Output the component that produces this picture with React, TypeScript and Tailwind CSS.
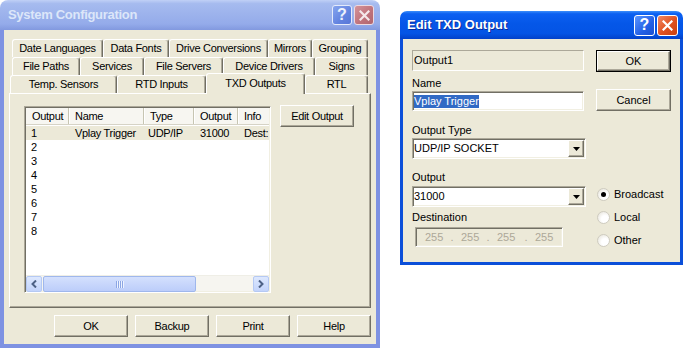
import React from "react";

// classic 3D edges used by buttons, fields and panels
const raised =
  "border border-t-white border-l-white border-r-[#716f64] border-b-[#716f64] shadow-[inset_-1px_-1px_0_#aca899]";
const sunken =
  "border border-t-[#aca899] border-l-[#aca899] border-r-white border-b-white shadow-[inset_1px_1px_0_#716f64,inset_-1px_-1px_0_#f1efe2]";

const tabRows = [
  {
    cls: "ml-[3px]",
    tabs: [
      { label: "Date Languages", w: "w-[91px]" },
      { label: "Data Fonts", w: "w-[66px]" },
      { label: "Drive Conversions", w: "w-[99px]" },
      { label: "Mirrors", w: "w-[44px]" },
      { label: "Grouping", w: "w-[56px]" },
    ],
  },
  {
    cls: "ml-[3px]",
    tabs: [
      { label: "File Paths", w: "w-[68px]" },
      { label: "Services", w: "w-[64px]" },
      { label: "File Servers", w: "w-[79px]" },
      { label: "Device Drivers", w: "w-[92px]" },
      { label: "Signs", w: "w-[53px]" },
    ],
  },
  {
    cls: "ml-[1px]",
    tabs: [
      { label: "Temp. Sensors", w: "w-[107px]" },
      { label: "RTD Inputs", w: "w-[89px]" },
      { label: "TXD Outputs", w: "w-[99px]", selected: true },
      { label: "RTL", w: "w-[63px]" },
    ],
  },
];

const columns = [
  { label: "Output", w: "w-[43px]" },
  { label: "Name", w: "w-[75px]" },
  { label: "Type", w: "w-[50px]" },
  { label: "Output", w: "w-[44px]" },
  { label: "Info", w: "w-[40px]" },
];

const rows = [
  ["1", "Vplay Trigger", "UDP/IP", "31000", "Dest:"],
  ["2"],
  ["3"],
  ["4"],
  ["5"],
  ["6"],
  ["7"],
  ["8"],
];

function Button({ label, className = "", isDefault = false }: { label: string; className?: string; isDefault?: boolean }) {
  if (isDefault) {
    return (
      <div className={`border border-black ${className}`}>
        <div className={`h-full bg-[#ece9d8] ${raised} flex items-center justify-center`}>{label}</div>
      </div>
    );
  }
  return <div className={`bg-[#ece9d8] ${raised} flex items-center justify-center ${className}`}>{label}</div>;
}

function CaptionButtons({ active }: { active: boolean }) {
  const size = active ? "w-[21px] h-[21px]" : "w-[20px] h-[20px]";
  return (
    <div className="flex gap-[2px]">
      <div
        className={`${size} rounded-[3px] border flex items-center justify-center font-bold text-[16px] leading-none ${
          active
            ? "border-white text-white bg-[linear-gradient(135deg,#5b95ff,#2260e6_60%,#1a4fd0)]"
            : "border-[#e4eafb] text-[#eef2fc] bg-[linear-gradient(135deg,#86a4ee,#6283e0_60%,#5877d8)]"
        }`}
      >
        ?
      </div>
      <div
        className={`${size} rounded-[3px] border flex items-center justify-center ${
          active
            ? "border-white bg-[linear-gradient(135deg,#f08a66,#e0511f_55%,#c9400f)]"
            : "border-[#ecd9e0] bg-[linear-gradient(135deg,#d4939a,#c0737c_55%,#b0666f)]"
        }`}
      >
        <svg width="11" height="11" viewBox="0 0 11 11">
          <path d="M1.5 1.5L9.5 9.5M9.5 1.5L1.5 9.5" stroke={active ? "#ffffff" : "#f4e8ea"} strokeWidth="2.2" strokeLinecap="square" />
        </svg>
      </div>
    </div>
  );
}

function ScrollArrow({ dir }: { dir: "left" | "right" }) {
  return (
    <div className="w-[16px] h-[16px] rounded-[2px] border border-[#b5c9f3] bg-[linear-gradient(to_bottom,#dde8fe,#c3d4fb)] flex items-center justify-center">
      <svg width="6" height="8" viewBox="0 0 6 8">
        <path
          d={dir === "left" ? "M5 0.5L1.5 4L5 7.5" : "M1 0.5L4.5 4L1 7.5"}
          stroke="#4d6185"
          strokeWidth="2"
          fill="none"
        />
      </svg>
    </div>
  );
}

function ListView() {
  return (
    <div className={`w-[247px] h-[187px] bg-white ${sunken} p-[1px] flex flex-col overflow-hidden`}>
      <div className="h-[17px] flex bg-[#f7f6f1] border-b border-b-[#d6d3c6] shrink-0">
        {columns.map((c, i) => (
          <div
            key={i}
            className={`${c.w} shrink-0 pl-[6px] flex items-center whitespace-nowrap ${
              i < columns.length - 1 ? "border-r border-r-[#c7c5b2] shadow-[1px_0_0_#ffffff]" : ""
            }`}
          >
            {c.label}
          </div>
        ))}
      </div>
      <div className="flex-1 pt-[1px]">
        {rows.map((r, i) => (
          <div key={i} className={`h-[14px] flex items-center whitespace-nowrap ${i === 0 ? "bg-[#ece9d8]" : ""}`}>
            <div className="w-[43px] pl-[5px] shrink-0">{r[0]}</div>
            <div className="w-[75px] pl-[6px] shrink-0">{r[1]}</div>
            <div className="w-[50px] pl-[4px] shrink-0">{r[2]}</div>
            <div className="w-[44px] pl-[6px] shrink-0">{r[3]}</div>
            <div className="w-[31px] pl-[6px] shrink-0 overflow-hidden">{r[4]}</div>
          </div>
        ))}
      </div>
      <div className="h-[16px] flex shrink-0 bg-[#f6f5f0] border-t border-t-[#efeee6]">
        <ScrollArrow dir="left" />
        <div className="w-[153px] ml-[1px] h-[16px] rounded-[2px] border border-[#9fb7ec] bg-[linear-gradient(to_bottom,#d4e0fd,#bccdfa)] flex items-center justify-center gap-[1px]">
          {[0, 1, 2, 3].map((k) => (
            <div key={k} className="w-[1px] h-[7px] bg-[#8ca6e4] shadow-[1px_0_0_#eef3ff]" />
          ))}
        </div>
        <div className="flex-1" />
        <ScrollArrow dir="right" />
      </div>
    </div>
  );
}

function SystemConfiguration() {
  return (
    <div className="w-[380px] h-[348px] flex flex-col shrink-0">
      <div className="h-[30px] rounded-t-[8px] bg-[linear-gradient(to_bottom,#c0d0f6_0%,#a6bbef_12%,#9cb2ec_50%,#94abea_80%,#8299df_100%)] flex items-center pl-[8px] pr-[6px]">
        <span className="flex-1 text-[13px] font-bold tracking-[-0.3px] text-[#dce6f9]">System Configuration</span>
        <CaptionButtons active={false} />
      </div>
      <div className="flex-1 bg-[#ece9d8] border-x-4 border-b-4 border-[#7e92e2] px-[5px] pt-[9px] pb-[7px] flex flex-col tracking-[-0.3px]">
        {tabRows.map((row, ri) => (
          <div key={ri} className={`h-[18px] flex ${row.cls}`}>
            {row.tabs.map((t: { label: string; w: string; selected?: boolean }) => (
              <div
                key={t.label}
                className={`${t.w} shrink-0 flex items-center justify-center whitespace-nowrap rounded-t-[3px] border-l border-t border-r border-l-white border-t-white border-r-[#716f64] shadow-[inset_-1px_0_0_#aca899] bg-[#ece9d8] ${
                  t.selected ? "h-[21px] -mt-[2px] relative z-10 pb-[2px]" : "h-[18px]"
                }`}
              >
                {t.label}
              </div>
            ))}
          </div>
        ))}
        <div className={`h-[215px] ${raised} pl-[14px] pt-[12px] flex items-start`}>
          <ListView />
          <Button label="Edit Output" className="w-[74px] h-[22px] ml-[9px] -mt-[1px]" />
        </div>
        <div className="mt-[7px] flex justify-end gap-[7px]">
          {["OK", "Backup", "Print", "Help"].map((b) => (
            <Button key={b} label={b} className="w-[74px] h-[22px]" />
          ))}
        </div>
      </div>
    </div>
  );
}

function Radio({ label, checked = false }: { label: string; checked?: boolean }) {
  return (
    <div className="flex items-center h-[13px]">
      <div className="w-[13px] h-[13px] rounded-full border border-[#cfccc0] bg-[radial-gradient(circle_at_65%_65%,#ffffff_35%,#e2dfd4)] flex items-center justify-center">
        {checked && <div className="w-[5px] h-[5px] rounded-full bg-black" />}
      </div>
      <span className="ml-[4px]">{label}</span>
    </div>
  );
}

function Combo({ value }: { value: string }) {
  return (
    <div className={`w-[174px] h-[21px] bg-white ${sunken} flex items-center`}>
      <span className="flex-1 pl-[1px] whitespace-nowrap">{value}</span>
      <div className={`w-[16px] h-[17px] mr-[1px] bg-[#ece9d8] ${raised} flex items-center justify-center`}>
        <svg width="7" height="4" viewBox="0 0 7 4">
          <path d="M0 0H7L3.5 4Z" fill="#000000" />
        </svg>
      </div>
    </div>
  );
}

function EditTxdOutput() {
  return (
    <div className="w-[283px] h-[254px] ml-[20px] mt-[11px] flex flex-col shrink-0">
      <div className="h-[28px] rounded-t-[7px] bg-[linear-gradient(to_bottom,#3d8ffa_0%,#0c60f1_10%,#0557e8_45%,#0454e5_80%,#0241c9_100%)] flex items-center pl-[7px] pr-[5px]">
        <span className="flex-1 text-[13px] font-bold text-white [text-shadow:1px_1px_0_#0a2a9a]">Edit TXD Output</span>
        <CaptionButtons active={true} />
      </div>
      <div className="flex-1 bg-[#ece9d8] border-x-[3px] border-b-[3px] border-[#0b4fd9] pl-[9px] pt-[11px] flex">
        <div className="w-[174px] flex flex-col">
          <div className="w-[172px] h-[21px] border border-t-[#aca899] border-l-[#aca899] border-r-white border-b-white pl-[1px] flex items-center">
            Output1
          </div>
          <div className="mt-[6px] h-[13px] leading-[13px]">Name</div>
          <div className={`mt-[1px] w-[172px] h-[20px] bg-white ${sunken} pl-[1px] flex items-center`}>
            <span className="bg-[#316ac5] text-white leading-[13px]">Vplay Trigger</span>
          </div>
          <div className="mt-[13px] h-[13px] leading-[13px]">Output Type</div>
          <div className="mt-[1px]">
            <Combo value="UDP/IP SOCKET" />
          </div>
          <div className="mt-[12px] h-[13px] leading-[13px]">Output</div>
          <div className="mt-[2px]">
            <Combo value="31000" />
          </div>
          <div className="mt-[4px] h-[13px] leading-[13px]">Destination</div>
          <div className={`mt-[3px] ml-[3px] w-[148px] h-[20px] ${sunken} pl-[9px] flex items-center text-[#aca899]`}>
            <span className="w-[18px]">255</span>
            <span className="w-[18px] text-center">.</span>
            <span className="w-[18px]">255</span>
            <span className="w-[18px] text-center">.</span>
            <span className="w-[20px]">255</span>
            <span className="w-[18px] text-center">.</span>
            <span className="w-[18px]">255</span>
          </div>
        </div>
        <div className="ml-[10px] flex flex-col">
          <Button label="OK" isDefault className="w-[75px] h-[22px]" />
          <Button label="Cancel" className="w-[75px] h-[22px] mt-[17px]" />
          <div className="ml-[1px] mt-[77px] flex flex-col gap-[10px]">
            <Radio label="Broadcast" checked />
            <Radio label="Local" />
            <Radio label="Other" />
          </div>
        </div>
      </div>
    </div>
  );
}

export default function App() {
  return (
    <div className="w-[684px] h-[351px] bg-white flex items-start overflow-hidden text-[11px] text-black font-['Liberation_Sans',Arial,sans-serif]">
      <SystemConfiguration />
      <EditTxdOutput />
    </div>
  );
}
